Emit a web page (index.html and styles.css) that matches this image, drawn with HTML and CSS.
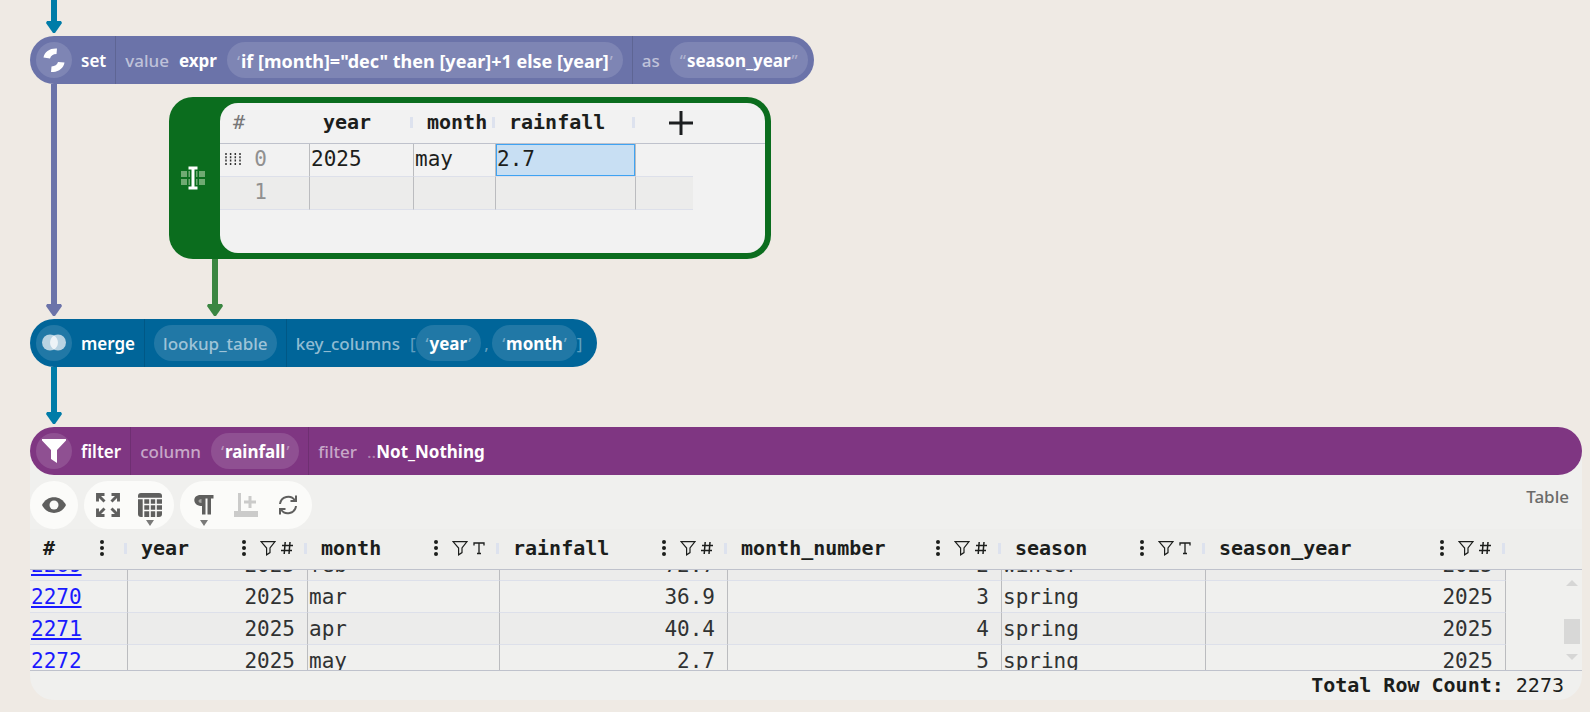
FILE: index.html
```
<!DOCTYPE html>
<html lang="en">
<head>
<meta charset="utf-8">
<title>Rainfall workflow</title>
<link rel="stylesheet" href="styles.css">
</head>
<body>
<svg class="defs" aria-hidden="true">
  <symbol id="kebab" viewBox="0 0 4 16"><circle cx="2" cy="2" r="2"/><circle cx="2" cy="8" r="2"/><circle cx="2" cy="14" r="2"/></symbol>
  <symbol id="funnel" viewBox="0 0 16 16"><path d="M1 1.6h14L10 8v4.6L6.600 14.800V8z" fill="none" stroke="currentColor" stroke-width="1.2"/></symbol>
  <symbol id="hash" viewBox="0 0 12 14"><path d="M4.200 1L3.200 13M9 1L8 13M1 4.500h11M0 9.500h11" fill="none" stroke="currentColor" stroke-width="1.5"/></symbol>
  <symbol id="tee" viewBox="0 0 12 14"><path d="M1 4.500V2h10v2.500M6 2v10.500M4 12.500h4" fill="none" stroke="currentColor" stroke-width="1.3"/></symbol>
</svg>

<main class="graph">
  <div class="edge edge-in teal"></div>

  <section class="node slate">
    <span class="node-icon"><svg width="24" height="24" viewBox="0 0 24 24"><path d="M1.500 9.500C2.500 3.500 8 0 15 .5L14.500 6C11 6 9 7.500 8 10.500z"/><path d="M22.500 14.500C21.500 20.500 16 24.500 9 24L9.500 18.500C13 18 15 17 16 14z"/></svg></span>
    <span class="part name">set</span>
    <span class="part"><span class="label">value</span><b>expr</b><span class="chip code"><i>‘</i><b>if [month]="dec" then [year]+1 else [year]</b><i>’</i></span></span>
    <span class="part"><span class="label">as</span><span class="chip"><i>“</i><b>season_year</b><i>”</i></span></span>
  </section>

  <div class="branch">
    <div class="edge slate"></div>
    <div class="side">
      <section class="table-node">
        <div class="table-grip"><svg width="24" height="24" viewBox="0 0 24 24"><g fill="#6faa72"><path d="M0 5h6v6H0zM0 13h6v6H0zM18 5h6v6h-6zM18 13h6v6h-6zM7.500 5H9v6H7.500zM7.500 13H9v6H7.500zM15 5h1.500v6H15zM15 13h1.500v6H15z"/></g><path d="M7.500 .500h9v3h-3v17h3v3h-9v-3h3v-17h-3z" fill="#fff"/></svg></div>
        <div class="editor">
          <table class="grid edit-grid">
            <colgroup><col class="e0"><col class="e1"><col class="e2"><col class="e3"><col class="e4"><col></colgroup>
            <thead><tr><th class="dim">#</th><th class="handle">year</th><th class="handle">month</th><th class="handle">rainfall</th><th class="add-cell"><button class="add" aria-label="Add column"><svg width="24" height="24" viewBox="0 0 24 24"><path d="M12 0v24M0 12h24" stroke="#1c1e20" stroke-width="3"/></svg></button></th><th></th></tr></thead>
            <tbody>
              <tr><td class="index"><span class="index-in"><svg width="16" height="12" viewBox="0 0 16 12" stroke="#333" stroke-width="1.500" stroke-dasharray="2 1.300"><path d="M1 0v12M5.600 0v12M10.300 0v12M15 0v12"/></svg>0</span></td><td>2025</td><td>may</td><td class="selected">2.7</td><td class="open"></td></tr>
              <tr class="alt"><td class="index"><span class="index-in">1</span></td><td></td><td></td><td></td><td class="open"></td></tr>
            </tbody>
          </table>
        </div>
      </section>
      <div class="edge side-edge green"></div>
    </div>
  </div>

  <section class="node blue">
    <span class="node-icon"><svg width="24" height="24" viewBox="0 0 24 24"><circle cx="8" cy="11.500" r="8" fill="#b9d3e2"/><circle cx="16" cy="11.500" r="8" fill="#b9d3e2"/><path d="M12 4.600a8 8 0 0 1 0 13.800a8 8 0 0 1 0-13.800z" fill="#edf3f7"/></svg></span>
    <span class="part name">merge</span>
    <span class="part"><span class="chip faint">lookup_table</span></span>
    <span class="part list-part"><span class="label">key_columns</span><span class="list"><i>[</i><span class="chip"><i>‘</i><b>year</b><i>’</i></span><i class="comma">,</i><span class="chip"><i>‘</i><b>month</b><i>’</i></span><i>]</i></span></span>
  </section>

  <div class="edge edge-mid teal"></div>

  <section class="result">
    <div class="node purple">
      <span class="node-icon"><svg width="24" height="24" viewBox="0 0 24 24"><path d="M0 0h24v1.500L15 11v13l-6-4v-9L0 1.500z"/></svg></span>
      <span class="part name">filter</span>
      <span class="part"><span class="label">column</span><span class="chip"><i>‘</i><b>rainfall</b><i>’</i></span></span>
      <span class="part"><span class="label">filter</span><span class="ctor"><i>..</i><b>Not_Nothing</b></span></span>
    </div>

    <div class="toolbar">
      <div class="tools"><button aria-label="Toggle visualization"><svg width="24" height="24" viewBox="0 0 24 24"><path d="M0 12C5 1.500 19 1.500 24 12C19 22.500 5 22.500 0 12z"/><circle cx="12" cy="12" r="4.500" fill="#fbfbf9"/></svg></button></div>
      <div class="tools">
        <button aria-label="Fullscreen"><svg class="line" width="24" height="24" viewBox="0 0 24 24" stroke-width="2.900"><path d="M1.500 8.500V1.500h7M15.500 1.500h7v7M22.500 15.500v7h-7M8.500 22.500H1.500v-7M2 2l6.500 6.500M22 2l-6.500 6.500M22 22l-6.500-6.500M2 22l6.500-6.500"/></svg></button>
        <button class="more" aria-label="Choose visualization"><svg width="24" height="24" viewBox="0 0 24 24"><rect width="24" height="24" rx="3"/><path d="M0 5.500h24M5.500 5.500V24M6 11.500h18M6 17.500h18M12 6v18M18 6v18" stroke="#fbfbf9" stroke-width="1.600"/></svg></button>
      </div>
      <div class="tools">
        <button class="more" aria-label="Text format"><svg width="24" height="24" viewBox="0 0 24 24"><path d="M8.500 2H21.500v3.500H19V21.500h-3.500V5.500h-2V21.500H10V13C0 13 0 2 8.500 2z"/><path d="M9.500 6v4C5.500 10 5.500 6 9.500 6z" fill="#a5a5a3"/></svg></button>
        <button class="off" disabled aria-label="Create plot"><svg width="24" height="24" viewBox="0 0 24 24"><path d="M4 0h3v18h17v6H0v-6h4zM14.500 3h3v4.500H22v3h-4.500V15h-3v-4.500H10v-3h4.500z"/></svg></button>
        <button aria-label="Reload"><svg class="line" width="24" height="24" viewBox="0 0 24 24" stroke-width="2"><path d="M4 11A8.200 8.200 0 0 1 19 7.500M20 2.500V8h-5.500M20 13A8.200 8.200 0 0 1 5 16.500M4 21.500V16h5.500"/></svg></button>
      </div>
      <span class="kind">Table</span>
    </div>

    <div class="data">
      <div class="viewport">
        <table class="grid data-grid">
          <colgroup><col class="c0"><col class="c1"><col class="c2"><col class="c3"><col class="c4"><col class="c5"><col class="c6"><col></colgroup>
          <thead><tr>
            <th class="handle"><span class="head">#<button class="kebab" aria-label="Column menu"><svg width="4" height="16"><use href="#kebab"/></svg></button></span></th>
            <th class="handle"><span class="head">year<button class="kebab" aria-label="Column menu"><svg width="4" height="16"><use href="#kebab"/></svg></button><svg width="16" height="16"><use href="#funnel"/></svg><svg width="12" height="14"><use href="#hash"/></svg></span></th>
            <th class="handle"><span class="head">month<button class="kebab" aria-label="Column menu"><svg width="4" height="16"><use href="#kebab"/></svg></button><svg width="16" height="16"><use href="#funnel"/></svg><svg width="12" height="14"><use href="#tee"/></svg></span></th>
            <th class="handle"><span class="head">rainfall<button class="kebab" aria-label="Column menu"><svg width="4" height="16"><use href="#kebab"/></svg></button><svg width="16" height="16"><use href="#funnel"/></svg><svg width="12" height="14"><use href="#hash"/></svg></span></th>
            <th class="handle"><span class="head">month_number<button class="kebab" aria-label="Column menu"><svg width="4" height="16"><use href="#kebab"/></svg></button><svg width="16" height="16"><use href="#funnel"/></svg><svg width="12" height="14"><use href="#hash"/></svg></span></th>
            <th class="handle"><span class="head">season<button class="kebab" aria-label="Column menu"><svg width="4" height="16"><use href="#kebab"/></svg></button><svg width="16" height="16"><use href="#funnel"/></svg><svg width="12" height="14"><use href="#tee"/></svg></span></th>
            <th class="handle"><span class="head">season_year<button class="kebab" aria-label="Column menu"><svg width="4" height="16"><use href="#kebab"/></svg></button><svg width="16" height="16"><use href="#funnel"/></svg><svg width="12" height="14"><use href="#hash"/></svg></span></th>
            <th></th>
          </tr></thead>
          <tbody>
            <tr class="alt"><td><a href="#2269">2269</a></td><td class="num">2025</td><td>feb</td><td class="num">72.7</td><td class="num">2</td><td>winter</td><td class="num">2025</td><td class="rest"></td></tr>
            <tr><td><a href="#2270">2270</a></td><td class="num">2025</td><td>mar</td><td class="num">36.9</td><td class="num">3</td><td>spring</td><td class="num">2025</td><td class="rest"></td></tr>
            <tr class="alt"><td><a href="#2271">2271</a></td><td class="num">2025</td><td>apr</td><td class="num">40.4</td><td class="num">4</td><td>spring</td><td class="num">2025</td><td class="rest"></td></tr>
            <tr><td><a href="#2272">2272</a></td><td class="num">2025</td><td>may</td><td class="num">2.7</td><td class="num">5</td><td>spring</td><td class="num">2025</td><td class="rest"></td></tr>
          </tbody>
        </table>
      </div>
      <div class="scrollbar"><span class="up"></span><span class="thumb"></span><span class="down"></span></div>
    </div>
    <footer class="count"><b>Total Row Count:</b> 2273</footer>
  </section>
</main>
<script src="main.js"></script>
</body>
</html>
```
FILE: styles.css
```
* { box-sizing: border-box; }

body {
  margin: 0;
  background: #efeae4;
  color: #1c1e1c;
  font-family: "Noto Sans", sans-serif;
  font-size: 17px;
  overflow: hidden;
}

button {
  padding: 0;
  border: 0;
  background: none;
  color: inherit;
  font: inherit;
}

svg { display: block; fill: currentColor; }
.line { fill: none; stroke: currentColor; }
i { font-style: normal; }
.defs { position: absolute; width: 0; height: 0; }

.graph {
  display: flex;
  flex-direction: column;
  align-items: flex-start;
  padding: 0 8px 12px 30px;
}

/* Edges */
.edge {
  display: flex;
  flex-direction: column;
  align-items: center;
  width: 16px;
  margin-left: 16px;
  padding-bottom: 3px;
}
.edge::before {
  content: "";
  flex: 1;
  width: 6px;
  background: var(--edge);
}
.edge::after {
  content: "";
  width: 16px;
  height: 12px;
  background: var(--edge);
  clip-path: polygon(1px 0, 15px 0, 16px 2px, 9px 12px, 7px 12px, 0 2px);
}
.edge-in { height: 36px; }
.edge-mid { height: 60px; }
.side-edge { height: 60px; margin-left: 38px; }
.teal { --edge: #007ca8; }
.green { --edge: #3b8642; }
.slate { --node: #6b73a9; --edge: #6b73a9; }
.blue { --node: #006599; }
.purple { --node: #7f3682; }

/* Nodes */
.node {
  display: flex;
  align-items: center;
  height: 48px;
  padding: 0 6px;
  border-radius: 24px;
  background: var(--node);
  color: #fff;
  line-height: 26px;
  white-space: nowrap;
}
.node-icon {
  display: grid;
  place-items: center;
  width: 36px;
  height: 36px;
  border-radius: 18px;
  background: rgba(255, 255, 255, 0.13);
}
.part {
  display: flex;
  align-items: center;
  gap: 10px;
  height: 48px;
  padding: 0 9px;
}
.part + .part { border-left: 1px solid rgba(0, 0, 0, 0.12); }
.part:last-child { padding-right: 0; }
.part.list-part { padding-right: 9px; }
.name { font-weight: 600; }
.node b { font-weight: 700; }
.label, .faint { color: rgba(255, 255, 255, 0.58); font-weight: 500; }
.node i { color: rgba(255, 255, 255, 0.4); }
.part.name, .label, .part > b, .ctor, .list > i { padding-top: 2px; }
.chip {
  height: 36px;
  padding: 6px 9px;
  border-radius: 18px;
  background: rgba(255, 255, 255, 0.13);
}
.chip i { padding: 0 1px; }
.code b { font-size: 18px; }
.list { display: flex; align-items: center; }
.comma { width: 11px; padding-left: 3px; }

/* Branch that feeds the lookup table */
.branch { display: flex; gap: 107px; }
.side { padding-top: 13px; }
.table-node {
  display: flex;
  padding: 6px;
  border-radius: 24px;
  background: #0b6d1e;
}
.table-grip {
  display: grid;
  place-items: center;
  width: 45px;
  padding-right: 9px;
}
.editor {
  width: 545px;
  height: 150px;
  border-radius: 18px;
  background: #f2f2f2;
  overflow: hidden;
}

/* Tables */
.grid {
  width: 100%;
  border-spacing: 0;
  table-layout: fixed;
  font-family: "DejaVu Sans Mono", monospace;
  font-size: 21px;
}
.grid th {
  position: relative;
  height: 41px;
  padding: 0 14px 2px 13px;
  border-bottom: 1px solid #bfc2cc;
  font-size: 20px;
  line-height: 24px;
  text-align: left;
  white-space: nowrap;
}
.grid .handle::after {
  content: "";
  position: absolute;
  right: 1px;
  top: 14px;
  width: 3px;
  height: 11px;
  background: #dde2ee;
}
.grid td {
  height: 32px;
  padding: 0 1px;
  border-right: 1px solid #bbbcbf;
  border-bottom: 1px solid #dde0ea;
  line-height: 24px;
}
.alt td { background: #ececeb; }

.edit-grid .dim { color: #777; font-weight: 400; }
.edit-grid td { height: 33px; padding-bottom: 2px; }
.edit-grid .open { border-right: 0; }
.edit-grid .selected {
  box-shadow: inset 0 0 0 1px #3fa3f2;
  background: #c8dff3;
}
.edit-grid .add-cell { padding: 0 0 0 33px; }
.add { display: block; }
.index-in {
  display: flex;
  align-items: center;
  justify-content: flex-end;
  gap: 13px;
  padding-right: 41px;
  color: #909090;
}
.e0 { width: 90px; }
.e1 { width: 104px; }
.e2 { width: 82px; }
.e3 { width: 140px; }
.e4 { width: 57px; }

/* Result panel */
.result {
  align-self: stretch;
  border-radius: 24px;
  background: #f0f0ee;
}
.toolbar {
  display: flex;
  gap: 6px;
  padding-top: 6px;
  color: #5f5f5e;
}
.tools {
  display: flex;
  align-items: center;
  gap: 18px;
  height: 48px;
  padding: 0 12px;
  border-radius: 24px;
  background: #fbfbf9;
}
.tools button { position: relative; }
.tools .off { color: #cbcbca; }
.tools .more::after {
  content: "";
  position: absolute;
  left: 8px;
  top: 27px;
  border: 4px solid transparent;
  border-top: 6px solid #7a7a79;
  border-bottom: 0;
}
.kind {
  margin-left: auto;
  padding: 4px 13px;
  color: #6b6b69;
  font-weight: 500;
  line-height: 24px;
}

.data {
  position: relative;
  border-bottom: 1px solid #bfc2cc;
}
.viewport {
  height: 141px;
  overflow: hidden;
}
.data-grid { color: #303232; }
.data-grid th {
  position: sticky;
  top: 0;
  z-index: 1;
  padding-right: 15px;
  background: #eeeeec;
  color: #1c1e1c;
}
.head {
  display: flex;
  align-items: center;
  gap: 5px;
}
.kebab { margin: 0 9px 0 auto; }
.num { text-align: right; }
.grid .num { padding-right: 12px; }
.grid .rest { border: 0; background: #f0f0ee; }
.data-grid a { color: #1a1aff; }
.c0 { width: 98px; }
.c1 { width: 180px; }
.c2 { width: 192px; }
.c3 { width: 228px; }
.c4 { width: 274px; }
.c5 { width: 204px; }
.c6 { width: 300px; }

.scrollbar {
  position: absolute;
  top: 51px;
  right: 2px;
  bottom: 10px;
  width: 16px;
  display: flex;
  flex-direction: column;
  align-items: center;
}
.up, .down {
  border: 6px solid transparent;
  border-top: 0;
  border-bottom: 6px solid #d6d6d5;
}
.down {
  border-top: 6px solid #d6d6d5;
  border-bottom: 0;
}
.thumb {
  width: 16px;
  height: 25px;
  margin: auto 0 10px;
  background: #d8d8d7;
}

.count {
  height: 29px;
  padding-right: 18px;
  font-family: "DejaVu Sans Mono", monospace;
  font-size: 20px;
  line-height: 29px;
  text-align: right;
}
```
FILE: main.js
```
document.querySelector(".viewport").scrollTop = 21;
```
